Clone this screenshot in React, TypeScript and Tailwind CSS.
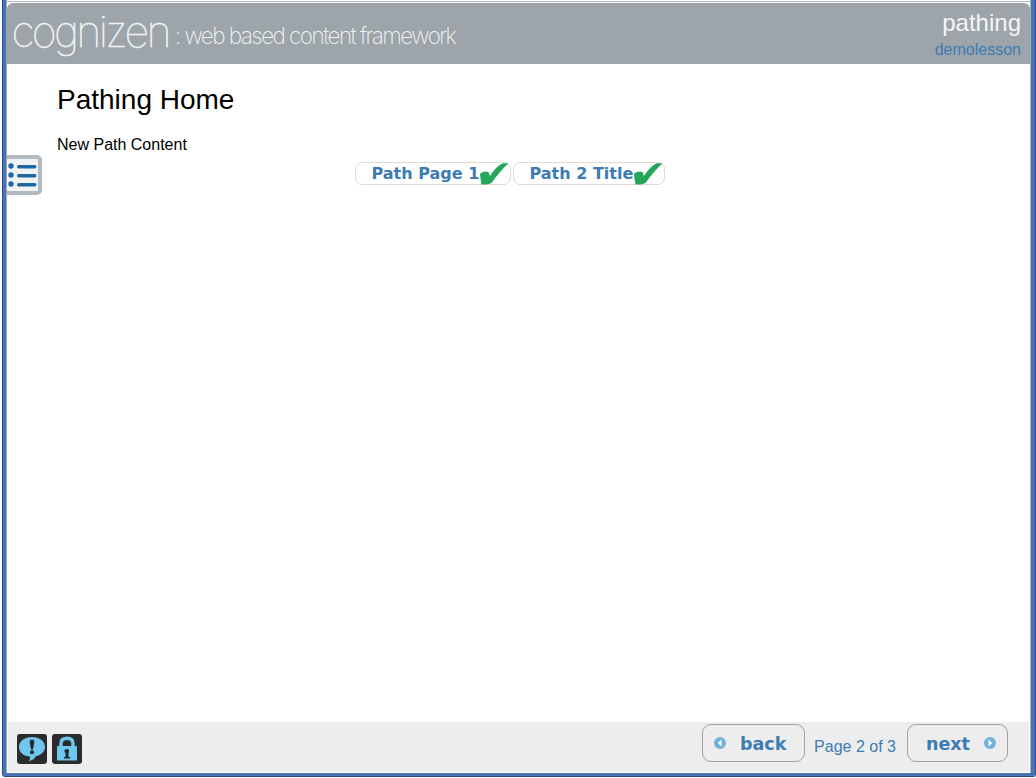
import React from "react";

const sans = "font-['Liberation_Sans',Arial,sans-serif]";
const verdana = "font-['DejaVu_Sans',Verdana,sans-serif]";

function Logo() {
  return (
    <svg width="500" height="61" viewBox="0 0 500 61" className="block shrink-0" fill="#f0f4f5">
      <text x="2.500" y="44" fontFamily="Inter, sans-serif" fontWeight="100" fontSize="43" textLength="160" lengthAdjust="spacing" stroke="#f0f4f5" strokeWidth="0.5">
        cognizen
      </text>
      <text x="166" y="40.500" fontFamily="Inter, sans-serif" fontWeight="200" fontSize="22.500" textLength="282" lengthAdjust="spacing">
        : web based content framework
      </text>
    </svg>
  );
}

function Check() {
  return (
    <svg width="30" height="23" viewBox="0 0 30 23" className="absolute right-[1px] top-[-1px]">
      <path d="M1 12C2.500 9.700 6 9.500 9.500 10L11 14C14.500 8.500 20 2.500 24 1.300H29.500C23 7.500 17 14.500 13 20.500Q10.500 22.500 7 22.500H2.500Q1.500 17 1 12Z" fill="#26a65b" />
    </svg>
  );
}

function PathButton({ label, width, pad }: { label: string; width: string; pad: string }) {
  return (
    <button className={`relative flex h-[23px] items-center rounded-[7px] border border-[#e2d9cf] bg-white text-[16px] font-bold whitespace-nowrap text-[#3c7cb4] ${verdana} ${width} ${pad}`}>
      <span>{label}</span>
      <Check />
    </button>
  );
}

function RoundArrow({ right = false }: { right?: boolean }) {
  return (
    <svg width="12" height="12" viewBox="0 0 12 12" className="shrink-0">
      <circle cx="6" cy="6" r="6" fill="#72b1dc" />
      <path d={right ? "M4.500 2.500v7L8.200 6Z" : "M7.500 2.500v7L3.800 6Z"} fill="#fff" />
    </svg>
  );
}

function Feedback() {
  return (
    <svg width="30" height="30" viewBox="0 0 30 30">
      <rect width="30" height="30" rx="3" fill="#292b2c" />
      <path d="M15 3C7.500 3 2 7.200 2 13s5 9.200 11 9.600c.5 2-.3 3.400-1.700 4.400C16 26.500 18 24.500 18.800 22.300C24 21 28 17.700 28 13C28 7.200 22.500 3 15 3Z" fill="#70c7ee" />
      <path d="M12.500 7Q15 4.500 17.500 7L16 15.500h-2Z" fill="#24292c" />
      <circle cx="15" cy="18.300" r="2" fill="#24292c" />
    </svg>
  );
}

function Lock() {
  return (
    <svg width="30" height="30" viewBox="0 0 30 30">
      <rect width="30" height="30" rx="3" fill="#292b2c" />
      <path d="M9 13V9.500C9 5.800 11.300 4.300 15 4.300s6 1.500 6 5.200V13" fill="none" stroke="#70c7ee" strokeWidth="3.400" />
      <rect x="5" y="12" width="20" height="14.500" rx="0.700" fill="#70c7ee" />
      <path d="M12.500 16Q15 14 17 16v2l-.5 1v4H18v1.500h-6V23h1.500v-4l-1-1Z" fill="#24292c" />
    </svg>
  );
}

export default function App() {
  return (
    <div className={`flex h-[778px] w-[1036px] bg-white pb-px pl-[2px] text-black ${sans}`}>
      <div className="flex min-w-0 flex-1 rounded-b-[3px] border-x border-b border-[#2c4a80]">
        <div className="flex min-w-0 flex-1 flex-col border-r-[4px] border-b-[3px] border-l-[3px] border-[#4a73b3] shadow-[inset_1px_0_#9aa7bd,inset_-1px_0_#a8afba]">
          <div className="mx-px h-[3px] shrink-0 border-b border-white bg-white pt-px">
            <div className="h-px bg-[#b1b7bd]" />
          </div>
          <header className="mx-px flex h-[61px] shrink-0 justify-between rounded-t-[6px] bg-[#9da5aa] pl-[2px]">
            <Logo />
            <div className="flex flex-col items-end pr-[9px] pt-[5px]">
              <h1 className="text-[24px] leading-[30px] text-[#f5f5f5]">pathing</h1>
              <div className="text-[16px] leading-[24px] text-[#3c7cb4]">demolesson</div>
            </div>
          </header>
          <main className="relative mx-[2px] flex-1 bg-white pl-[49px] pt-[20px]">
            <h2 className="text-[28px] leading-[32px]">Pathing Home</h2>
            <p className="mt-[20px] text-[16px] leading-[18px]">New Path Content</p>
            <div className="ml-[298px] mt-[8px] flex gap-[2px]">
              <PathButton label="Path Page 1" width="w-[156px]" pad="pl-[15.5px]" />
              <PathButton label="Path 2 Title" width="w-[152px]" pad="pl-[15.5px]" />
            </div>
            <button aria-label="Contents" className="absolute left-[-1px] top-[91px] h-[40px] w-[35px] rounded-r-[5px] border-y-[4px] border-r-[4px] border-[#b1bac0] bg-[#f1f2f3]">
              <svg width="31" height="32" viewBox="0 0 31 32" fill="#1d67a5">
                {[7, 16, 25].map((y) => (
                  <g key={y}>
                    <circle cx="4" cy={y} r="2.700" />
                    <rect x="10" y={y - 1} width="19.500" height="3.600" rx="1.800" />
                  </g>
                ))}
              </svg>
            </button>
          </main>
          <footer className="mx-[2px] mb-px flex h-[50px] shrink-0 items-start bg-[#ededed] pl-[9px] pr-[21px]">
            <div className="flex gap-[5px] pt-[12px]">
              <Feedback />
              <Lock />
            </div>
            <nav className="ml-auto flex pt-[2px] text-[#3c7cb4]">
              <button className={`flex h-[38px] w-[103px] items-center rounded-[9px] border border-[#a1a1a1] pl-[11px] text-[17.5px] font-bold ${verdana}`}>
                <RoundArrow />
                <span className="ml-[14px] pt-[2px]">back</span>
              </button>
              <span className="w-[102px] pr-[2px] pt-[11px] text-center text-[16px] leading-[24px]">Page 2 of 3</span>
              <button className={`flex h-[38px] w-[101px] items-center justify-between rounded-[9px] border border-[#a1a1a1] pl-[18px] pr-[11px] text-[17.5px] font-bold ${verdana}`}>
                <span className="pt-[2px]">next</span>
                <RoundArrow right />
              </button>
            </nav>
          </footer>
        </div>
      </div>
    </div>
  );
}
